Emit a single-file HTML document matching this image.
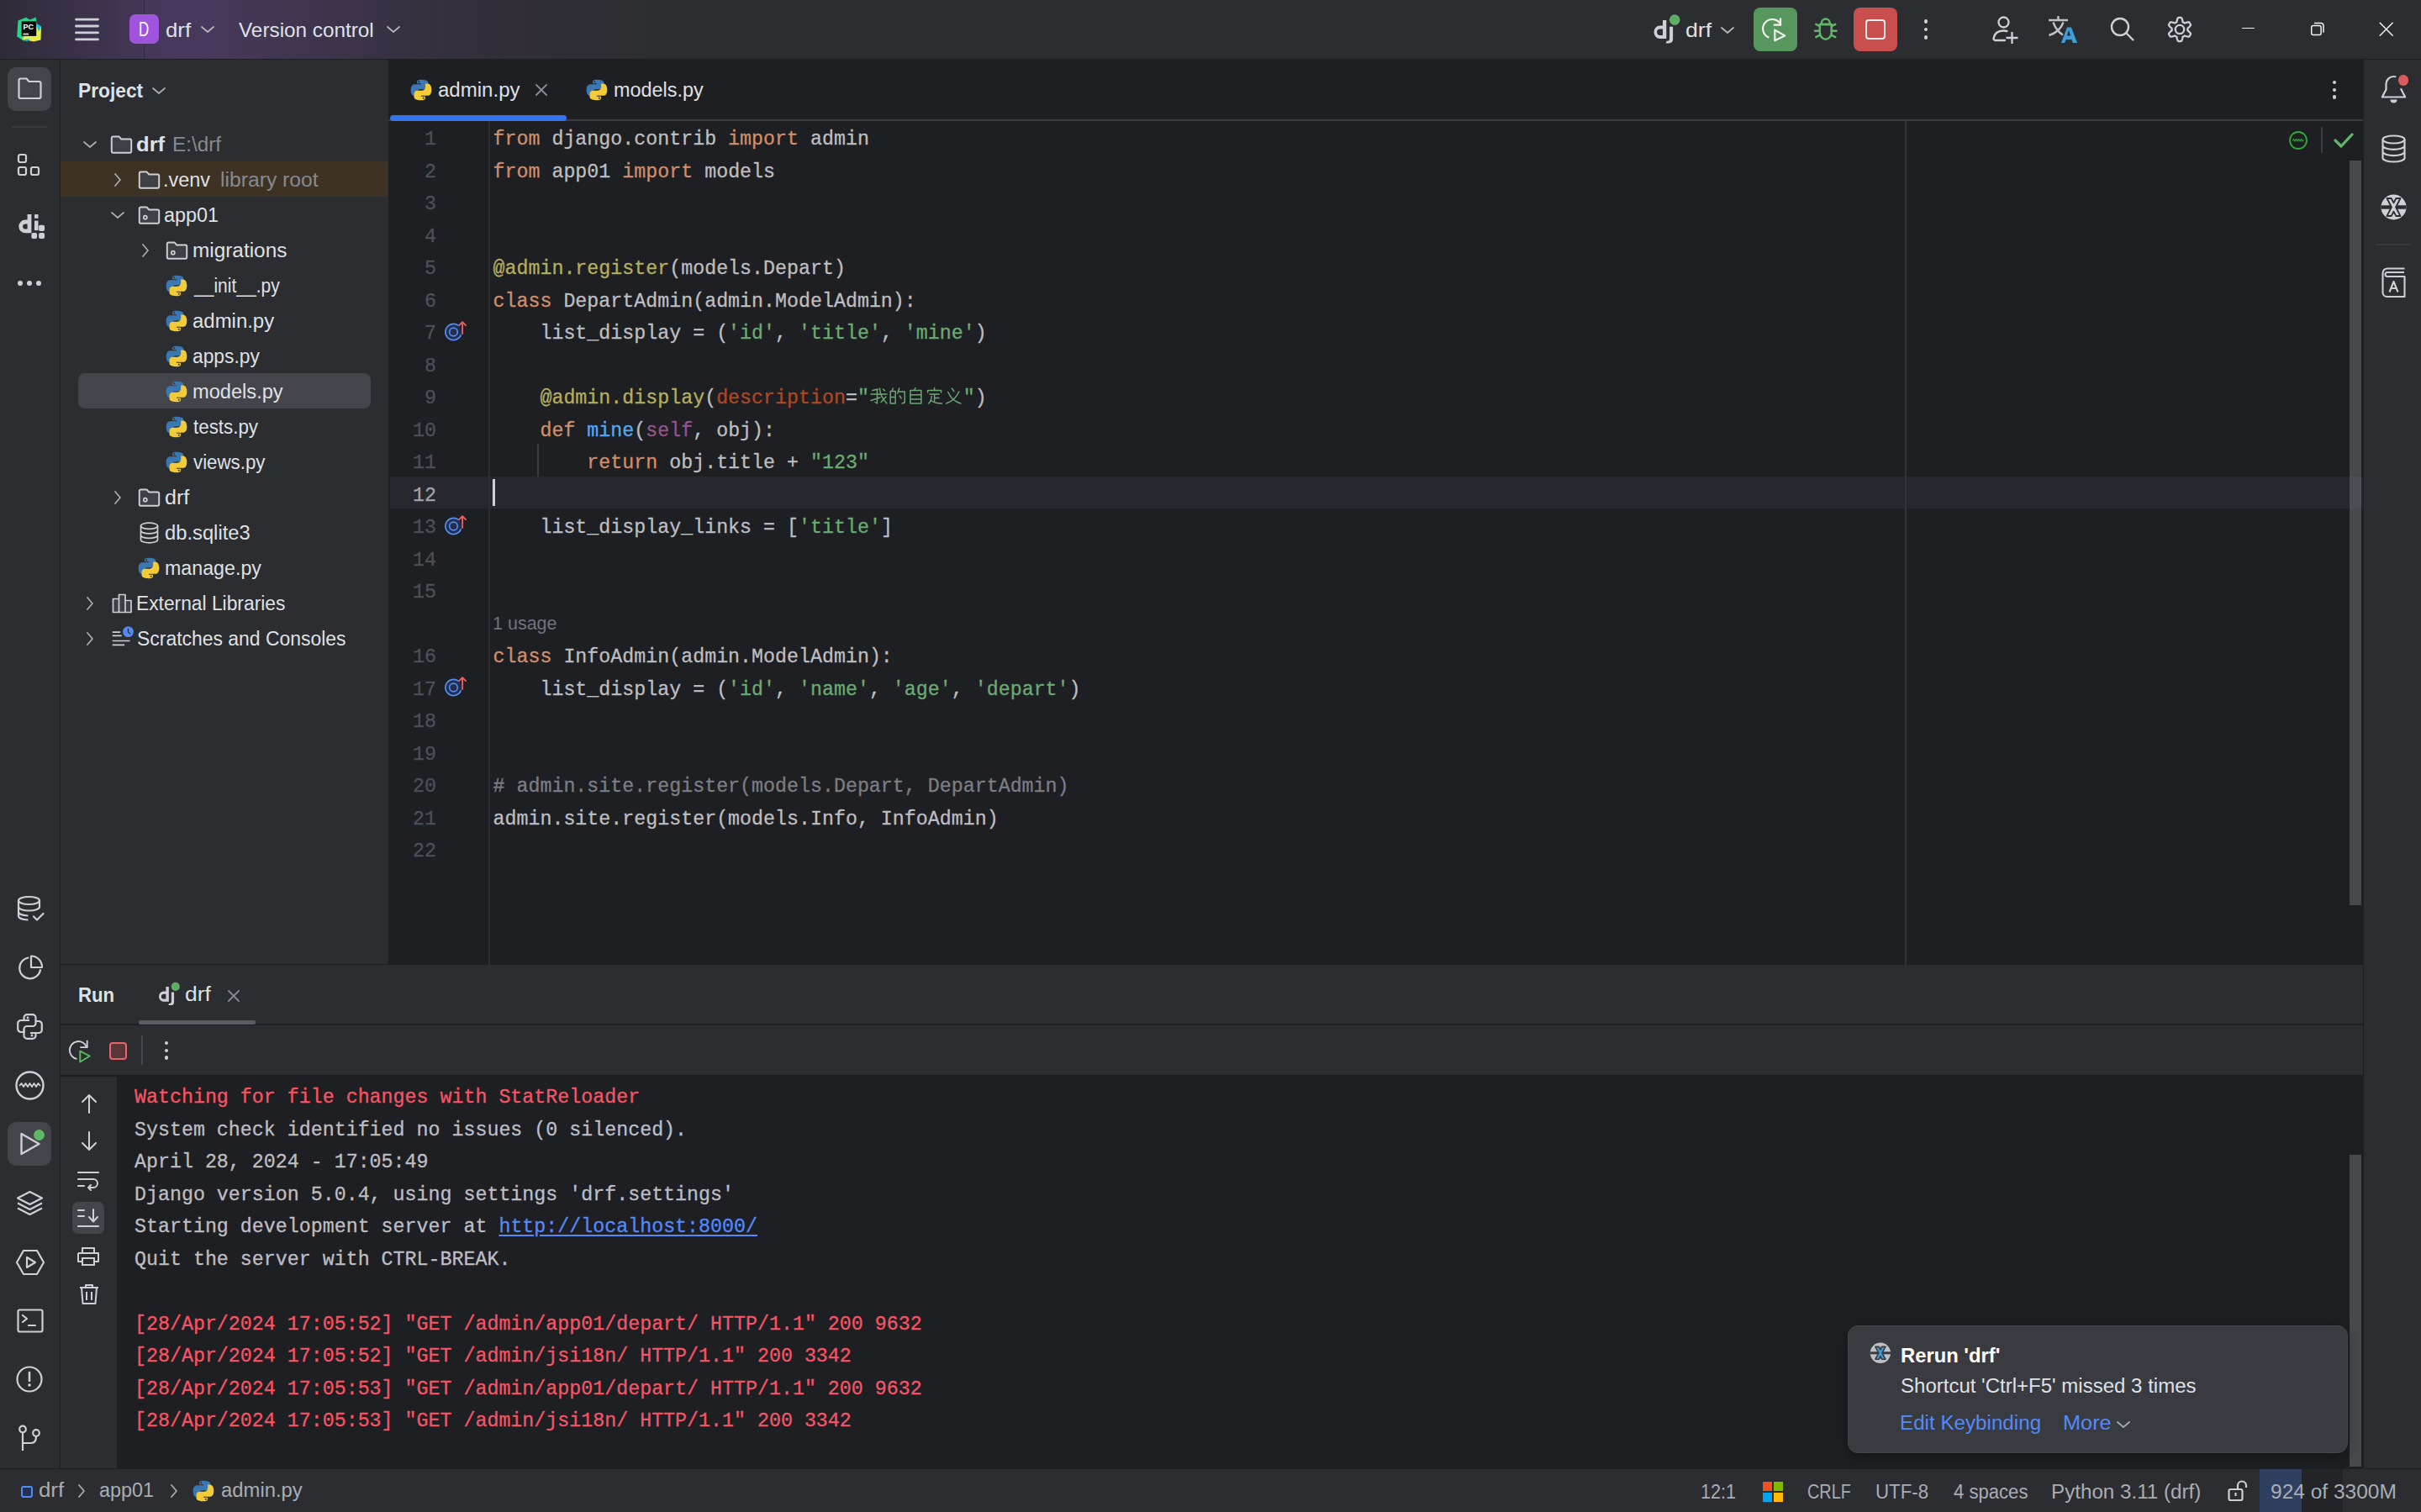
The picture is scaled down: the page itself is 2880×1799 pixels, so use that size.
<!DOCTYPE html><html><head><meta charset="utf-8"><style>
*{margin:0;padding:0;box-sizing:border-box}
html,body{width:2880px;height:1799px;overflow:hidden;background:#2b2d30;font-family:"Liberation Sans",sans-serif;color:#dfe1e5}
.a{position:absolute}
.t{position:absolute;white-space:pre;line-height:40px;height:40px}
.m{font-family:"Liberation Mono",monospace;-webkit-text-stroke:0.3px currentColor}
svg{position:absolute;overflow:visible}
</style></head><body>
<div class="a" style="left:0;top:0;width:2880px;height:70px;background:#2b2d30"></div>
<div class="a" style="left:0;top:0;width:1000px;height:70px;background:linear-gradient(90deg,#2f2b36 0px,#3a3148 90px,#46385a 190px,#47395b 250px,#3e344b 380px,#36303f 500px,#302d35 640px,#2b2d30 820px)"></div>
<div class="a" style="left:171px;top:0px;width:1px;height:70px;background:rgba(30,31,34,0.45);"></div>
<div class="a" style="left:0px;top:70px;width:2880px;height:1px;background:#1e1f22;"></div>
<div class="a" style="left:0px;top:71px;width:71px;height:1676px;background:#2b2d30;"></div>
<div class="a" style="left:71px;top:71px;width:1px;height:1676px;background:#1e1f22;"></div>
<div class="a" style="left:72px;top:71px;width:390px;height:1076px;background:#2b2d30;"></div>
<div class="a" style="left:462px;top:71px;width:2349px;height:1077px;background:#1e1f22;"></div>
<div class="a" style="left:2811px;top:71px;width:1px;height:1676px;background:#1e1f22;"></div>
<div class="a" style="left:2812px;top:71px;width:68px;height:1676px;background:#2b2d30;"></div>
<div class="a" style="left:72px;top:1147px;width:2739px;height:1px;background:#1e1f22;"></div>
<div class="a" style="left:72px;top:1148px;width:2739px;height:71px;background:#2b2d30;"></div>
<div class="a" style="left:72px;top:1218px;width:2739px;height:2px;background:#1e1f22;"></div>
<div class="a" style="left:72px;top:1220px;width:2739px;height:59px;background:#2b2d30;"></div>
<div class="a" style="left:72px;top:1281px;width:67px;height:466px;background:#2b2d30;"></div>
<div class="a" style="left:72px;top:1279px;width:2739px;height:2px;background:#1e1f22;"></div>
<div class="a" style="left:139px;top:1279px;width:2672px;height:468px;background:#1e1f22;"></div>
<div class="a" style="left:0px;top:1747px;width:2880px;height:1px;background:#1e1f22;"></div>
<div class="a" style="left:0px;top:1748px;width:2880px;height:51px;background:#2b2d30;"></div>
<div class="a" style="left:462px;top:142px;width:2349px;height:2px;background:#393b40;"></div>
<div class="a" style="left:464px;top:137px;width:210px;height:7px;background:#3574f0;border-radius:3.5px"></div>
<div class="a" style="left:464px;top:567px;width:2347px;height:38px;background:#26282e;"></div>
<div class="a" style="left:581px;top:144px;width:2px;height:1004px;background:#2b2d31;"></div>
<div class="a" style="left:2266px;top:144px;width:2px;height:1004px;background:#313337;"></div>
<div class="a" style="left:639px;top:528px;width:2px;height:39px;background:#393b40;"></div>
<div class="a m" style="left:440px;width:79px;text-align:right;top:147.04px;height:38.5px;line-height:38.5px;font-size:23.3px;color:#4b5059;white-space:pre">1</div>
<div class="a m" style="left:586.5px;top:147.04px;height:38.5px;line-height:38.5px;font-size:23.3px;white-space:pre"><span style="color:#cf8e6d">from</span><span style="color:#bcbec4"> django.contrib </span><span style="color:#cf8e6d">import</span><span style="color:#bcbec4"> admin</span></div>
<div class="a m" style="left:440px;width:79px;text-align:right;top:185.54px;height:38.5px;line-height:38.5px;font-size:23.3px;color:#4b5059;white-space:pre">2</div>
<div class="a m" style="left:586.5px;top:185.54px;height:38.5px;line-height:38.5px;font-size:23.3px;white-space:pre"><span style="color:#cf8e6d">from</span><span style="color:#bcbec4"> app01 </span><span style="color:#cf8e6d">import</span><span style="color:#bcbec4"> models</span></div>
<div class="a m" style="left:440px;width:79px;text-align:right;top:224.04px;height:38.5px;line-height:38.5px;font-size:23.3px;color:#4b5059;white-space:pre">3</div>
<div class="a m" style="left:440px;width:79px;text-align:right;top:262.54px;height:38.5px;line-height:38.5px;font-size:23.3px;color:#4b5059;white-space:pre">4</div>
<div class="a m" style="left:440px;width:79px;text-align:right;top:301.04px;height:38.5px;line-height:38.5px;font-size:23.3px;color:#4b5059;white-space:pre">5</div>
<div class="a m" style="left:586.5px;top:301.04px;height:38.5px;line-height:38.5px;font-size:23.3px;white-space:pre"><span style="color:#b3ae60">@admin.register</span><span style="color:#bcbec4">(models.Depart)</span></div>
<div class="a m" style="left:440px;width:79px;text-align:right;top:339.54px;height:38.5px;line-height:38.5px;font-size:23.3px;color:#4b5059;white-space:pre">6</div>
<div class="a m" style="left:586.5px;top:339.54px;height:38.5px;line-height:38.5px;font-size:23.3px;white-space:pre"><span style="color:#cf8e6d">class</span><span style="color:#bcbec4"> DepartAdmin(admin.ModelAdmin):</span></div>
<div class="a m" style="left:440px;width:79px;text-align:right;top:378.04px;height:38.5px;line-height:38.5px;font-size:23.3px;color:#4b5059;white-space:pre">7</div>
<div class="a m" style="left:586.5px;top:378.04px;height:38.5px;line-height:38.5px;font-size:23.3px;white-space:pre"><span style="color:#bcbec4">    list_display = (</span><span style="color:#6aab73">'id'</span><span style="color:#bcbec4">, </span><span style="color:#6aab73">'title'</span><span style="color:#bcbec4">, </span><span style="color:#6aab73">'mine'</span><span style="color:#bcbec4">)</span></div>
<div class="a m" style="left:440px;width:79px;text-align:right;top:416.54px;height:38.5px;line-height:38.5px;font-size:23.3px;color:#4b5059;white-space:pre">8</div>
<div class="a m" style="left:440px;width:79px;text-align:right;top:455.04px;height:38.5px;line-height:38.5px;font-size:23.3px;color:#4b5059;white-space:pre">9</div>
<div class="a m" style="left:586.5px;top:455.04px;height:38.5px;line-height:38.5px;font-size:23.3px;white-space:pre"><span style="color:#b3ae60">    @admin.display</span><span style="color:#bcbec4">(</span><span style="color:#aa4926">description</span><span style="color:#bcbec4">=</span><span style="color:#6aab73">"        "</span><span style="color:#bcbec4">)</span></div>
<div class="a m" style="left:440px;width:79px;text-align:right;top:493.54px;height:38.5px;line-height:38.5px;font-size:23.3px;color:#4b5059;white-space:pre">10</div>
<div class="a m" style="left:586.5px;top:493.54px;height:38.5px;line-height:38.5px;font-size:23.3px;white-space:pre"><span style="color:#bcbec4">    </span><span style="color:#cf8e6d">def</span><span style="color:#bcbec4"> </span><span style="color:#56a8f5">mine</span><span style="color:#bcbec4">(</span><span style="color:#94558d">self</span><span style="color:#bcbec4">, obj):</span></div>
<div class="a m" style="left:440px;width:79px;text-align:right;top:532.04px;height:38.5px;line-height:38.5px;font-size:23.3px;color:#4b5059;white-space:pre">11</div>
<div class="a m" style="left:586.5px;top:532.04px;height:38.5px;line-height:38.5px;font-size:23.3px;white-space:pre"><span style="color:#bcbec4">        </span><span style="color:#cf8e6d">return</span><span style="color:#bcbec4"> obj.title + </span><span style="color:#6aab73">"123"</span></div>
<div class="a m" style="left:440px;width:79px;text-align:right;top:570.54px;height:38.5px;line-height:38.5px;font-size:23.3px;color:#a1a3ab;white-space:pre">12</div>
<div class="a m" style="left:440px;width:79px;text-align:right;top:609.04px;height:38.5px;line-height:38.5px;font-size:23.3px;color:#4b5059;white-space:pre">13</div>
<div class="a m" style="left:586.5px;top:609.04px;height:38.5px;line-height:38.5px;font-size:23.3px;white-space:pre"><span style="color:#bcbec4">    list_display_links = [</span><span style="color:#6aab73">'title'</span><span style="color:#bcbec4">]</span></div>
<div class="a m" style="left:440px;width:79px;text-align:right;top:647.54px;height:38.5px;line-height:38.5px;font-size:23.3px;color:#4b5059;white-space:pre">14</div>
<div class="a m" style="left:440px;width:79px;text-align:right;top:686.04px;height:38.5px;line-height:38.5px;font-size:23.3px;color:#4b5059;white-space:pre">15</div>
<div class="a" style="left:586.0px;top:722.54px;height:38.5px;line-height:38.5px;font-size:21.5px;color:#6f737a;white-space:pre">1 usage</div>
<div class="a m" style="left:440px;width:79px;text-align:right;top:763.04px;height:38.5px;line-height:38.5px;font-size:23.3px;color:#4b5059;white-space:pre">16</div>
<div class="a m" style="left:586.5px;top:763.04px;height:38.5px;line-height:38.5px;font-size:23.3px;white-space:pre"><span style="color:#cf8e6d">class</span><span style="color:#bcbec4"> InfoAdmin(admin.ModelAdmin):</span></div>
<div class="a m" style="left:440px;width:79px;text-align:right;top:801.54px;height:38.5px;line-height:38.5px;font-size:23.3px;color:#4b5059;white-space:pre">17</div>
<div class="a m" style="left:586.5px;top:801.54px;height:38.5px;line-height:38.5px;font-size:23.3px;white-space:pre"><span style="color:#bcbec4">    list_display = (</span><span style="color:#6aab73">'id'</span><span style="color:#bcbec4">, </span><span style="color:#6aab73">'name'</span><span style="color:#bcbec4">, </span><span style="color:#6aab73">'age'</span><span style="color:#bcbec4">, </span><span style="color:#6aab73">'depart'</span><span style="color:#bcbec4">)</span></div>
<div class="a m" style="left:440px;width:79px;text-align:right;top:840.04px;height:38.5px;line-height:38.5px;font-size:23.3px;color:#4b5059;white-space:pre">18</div>
<div class="a m" style="left:440px;width:79px;text-align:right;top:878.54px;height:38.5px;line-height:38.5px;font-size:23.3px;color:#4b5059;white-space:pre">19</div>
<div class="a m" style="left:440px;width:79px;text-align:right;top:917.04px;height:38.5px;line-height:38.5px;font-size:23.3px;color:#4b5059;white-space:pre">20</div>
<div class="a m" style="left:586.5px;top:917.04px;height:38.5px;line-height:38.5px;font-size:23.3px;white-space:pre"><span style="color:#7a7e85"># admin.site.register(models.Depart, DepartAdmin)</span></div>
<div class="a m" style="left:440px;width:79px;text-align:right;top:955.54px;height:38.5px;line-height:38.5px;font-size:23.3px;color:#4b5059;white-space:pre">21</div>
<div class="a m" style="left:586.5px;top:955.54px;height:38.5px;line-height:38.5px;font-size:23.3px;white-space:pre"><span style="color:#bcbec4">admin.site.register(models.Info, InfoAdmin)</span></div>
<div class="a m" style="left:440px;width:79px;text-align:right;top:994.04px;height:38.5px;line-height:38.5px;font-size:23.3px;color:#4b5059;white-space:pre">22</div>
<div class="a" style="left:586px;top:570px;width:3px;height:32px;background:#ced0d6;"></div>
<div class="a" style="left:2795px;top:191px;width:14px;height:886px;background:rgba(128,130,136,0.42);"></div>
<div class="a" style="left:92.81px;top:88px;height:40px;line-height:40px;white-space:pre;font-size:23px;color:#dfe1e5;font-weight:bold;transform:scaleX(0.9896);transform-origin:0 0;">Project</div>
<svg style="left:180px;top:102px" width="18" height="12" viewBox="0 0 18 12"><path d="M2 3 L9 9 L16 3" fill="none" stroke="#a8abb0" stroke-width="1.8" stroke-linecap="round" stroke-linejoin="round"/></svg>
<div class="a" style="left:72px;top:192px;width:390px;height:42px;background:#3d3223;"></div>
<div class="a" style="left:93px;top:444px;width:348px;height:42px;background:#43454a;border-radius:8px"></div>
<svg style="left:97.5px;top:166px" width="18" height="12" viewBox="0 0 18 12"><path d="M2 3 L9 9 L16 3" fill="none" stroke="#a8abb0" stroke-width="1.8" stroke-linecap="round" stroke-linejoin="round"/></svg>
<svg style="left:131.5px;top:159px" width="25" height="25" viewBox="0 0 16 16"><path d="M1.5 2.2h4.6l1.7 1.9h6.7a1 1 0 0 1 1 1v8.4a1 1 0 0 1-1 1H1.5a1 1 0 0 1-1-1V3.2a1 1 0 0 1 1-1z" fill="#3e4045" stroke="#ced0d6" stroke-width="1.25"/></svg>
<div class="a" style="left:161.89px;top:152px;height:40px;line-height:40px;white-space:pre;font-size:23px;color:#dfe1e5;font-weight:bold;transform:scaleX(1.1133);transform-origin:0 0;">drf</div>
<div class="a" style="left:204.89px;top:152px;height:40px;line-height:40px;white-space:pre;font-size:23px;color:#868a91;font-weight:normal;transform:scaleX(1.0566);transform-origin:0 0;">E:\drf</div>
<svg style="left:133.5px;top:205px" width="12" height="18" viewBox="0 0 12 18"><path d="M3 2 L9 9 L3 16" fill="none" stroke="#a8abb0" stroke-width="1.8" stroke-linecap="round" stroke-linejoin="round"/></svg>
<svg style="left:164.5px;top:201px" width="25" height="25" viewBox="0 0 16 16"><path d="M1.5 2.2h4.6l1.7 1.9h6.7a1 1 0 0 1 1 1v8.4a1 1 0 0 1-1 1H1.5a1 1 0 0 1-1-1V3.2a1 1 0 0 1 1-1z" fill="#3e4045" stroke="#ced0d6" stroke-width="1.25"/></svg>
<div class="a" style="left:193.96px;top:194px;height:40px;line-height:40px;white-space:pre;font-size:23px;color:#dfe1e5;font-weight:normal;transform:scaleX(1.0189);transform-origin:0 0;">.venv</div>
<div class="a" style="left:261.93px;top:194px;height:40px;line-height:40px;white-space:pre;font-size:23px;color:#868a91;font-weight:normal;transform:scaleX(1.0741);transform-origin:0 0;">library root</div>
<svg style="left:130.5px;top:250px" width="18" height="12" viewBox="0 0 18 12"><path d="M2 3 L9 9 L16 3" fill="none" stroke="#a8abb0" stroke-width="1.8" stroke-linecap="round" stroke-linejoin="round"/></svg>
<svg style="left:164.5px;top:243px" width="25" height="25" viewBox="0 0 16 16"><path d="M1.5 2.2h4.6l1.7 1.9h6.7a1 1 0 0 1 1 1v8.4a1 1 0 0 1-1 1H1.5a1 1 0 0 1-1-1V3.2a1 1 0 0 1 1-1z" fill="#3e4045" stroke="#ced0d6" stroke-width="1.25"/><circle cx="5" cy="10" r="1.3" fill="none" stroke="#ced0d6" stroke-width="1.1"/></svg>
<div class="a" style="left:194.98px;top:236px;height:40px;line-height:40px;white-space:pre;font-size:23px;color:#dfe1e5;font-weight:normal;transform:scaleX(1.0161);transform-origin:0 0;">app01</div>
<svg style="left:166.5px;top:289px" width="12" height="18" viewBox="0 0 12 18"><path d="M3 2 L9 9 L3 16" fill="none" stroke="#a8abb0" stroke-width="1.8" stroke-linecap="round" stroke-linejoin="round"/></svg>
<svg style="left:197.5px;top:285px" width="25" height="25" viewBox="0 0 16 16"><path d="M1.5 2.2h4.6l1.7 1.9h6.7a1 1 0 0 1 1 1v8.4a1 1 0 0 1-1 1H1.5a1 1 0 0 1-1-1V3.2a1 1 0 0 1 1-1z" fill="#3e4045" stroke="#ced0d6" stroke-width="1.25"/><circle cx="5" cy="10" r="1.3" fill="none" stroke="#ced0d6" stroke-width="1.1"/></svg>
<div class="a" style="left:228.94px;top:278px;height:40px;line-height:40px;white-space:pre;font-size:23px;color:#dfe1e5;font-weight:normal;transform:scaleX(1.0590);transform-origin:0 0;">migrations</div>
<svg style="left:197.0px;top:326.5px" width="26" height="26" viewBox="0 0 16 16"><path d="M7.95.4C5.1.4 4.95 1.7 4.95 1.7V3.3h3.1v.5H3.5S.4 3.45.4 8.05s2.75 4.5 2.75 4.5h1.7v-2.25s-.1-2.75 2.7-2.75h3.05s2.6.05 2.6-2.5V2.85S13.6.4 7.95.4z" fill="#3b77b0"/><circle cx="6.3" cy="2.05" r=".6" fill="#2b2d30"/><g transform="rotate(180 8 8)"><path d="M7.95.4C5.1.4 4.95 1.7 4.95 1.7V3.3h3.1v.5H3.5S.4 3.45.4 8.05s2.75 4.5 2.75 4.5h1.7v-2.25s-.1-2.75 2.7-2.75h3.05s2.6.05 2.6-2.5V2.85S13.6.4 7.95.4z" fill="#f2cb36"/><circle cx="6.3" cy="2.05" r=".6" fill="#2b2d30"/></g></svg>
<div class="a" style="left:230.61px;top:320px;height:40px;line-height:40px;white-space:pre;font-size:23px;color:#dfe1e5;font-weight:normal;transform:scaleX(0.9142);transform-origin:0 0;">__init__.py</div>
<svg style="left:197.0px;top:368.5px" width="26" height="26" viewBox="0 0 16 16"><path d="M7.95.4C5.1.4 4.95 1.7 4.95 1.7V3.3h3.1v.5H3.5S.4 3.45.4 8.05s2.75 4.5 2.75 4.5h1.7v-2.25s-.1-2.75 2.7-2.75h3.05s2.6.05 2.6-2.5V2.85S13.6.4 7.95.4z" fill="#3b77b0"/><circle cx="6.3" cy="2.05" r=".6" fill="#2b2d30"/><g transform="rotate(180 8 8)"><path d="M7.95.4C5.1.4 4.95 1.7 4.95 1.7V3.3h3.1v.5H3.5S.4 3.45.4 8.05s2.75 4.5 2.75 4.5h1.7v-2.25s-.1-2.75 2.7-2.75h3.05s2.6.05 2.6-2.5V2.85S13.6.4 7.95.4z" fill="#f2cb36"/><circle cx="6.3" cy="2.05" r=".6" fill="#2b2d30"/></g></svg>
<div class="a" style="left:228.66px;top:362px;height:40px;line-height:40px;white-space:pre;font-size:23px;color:#dfe1e5;font-weight:normal;transform:scaleX(1.0409);transform-origin:0 0;">admin.py</div>
<svg style="left:197.0px;top:410.5px" width="26" height="26" viewBox="0 0 16 16"><path d="M7.95.4C5.1.4 4.95 1.7 4.95 1.7V3.3h3.1v.5H3.5S.4 3.45.4 8.05s2.75 4.5 2.75 4.5h1.7v-2.25s-.1-2.75 2.7-2.75h3.05s2.6.05 2.6-2.5V2.85S13.6.4 7.95.4z" fill="#3b77b0"/><circle cx="6.3" cy="2.05" r=".6" fill="#2b2d30"/><g transform="rotate(180 8 8)"><path d="M7.95.4C5.1.4 4.95 1.7 4.95 1.7V3.3h3.1v.5H3.5S.4 3.45.4 8.05s2.75 4.5 2.75 4.5h1.7v-2.25s-.1-2.75 2.7-2.75h3.05s2.6.05 2.6-2.5V2.85S13.6.4 7.95.4z" fill="#f2cb36"/><circle cx="6.3" cy="2.05" r=".6" fill="#2b2d30"/></g></svg>
<div class="a" style="left:228.71px;top:404px;height:40px;line-height:40px;white-space:pre;font-size:23px;color:#dfe1e5;font-weight:normal;transform:scaleX(0.9913);transform-origin:0 0;">apps.py</div>
<svg style="left:197.0px;top:452.5px" width="26" height="26" viewBox="0 0 16 16"><path d="M7.95.4C5.1.4 4.95 1.7 4.95 1.7V3.3h3.1v.5H3.5S.4 3.45.4 8.05s2.75 4.5 2.75 4.5h1.7v-2.25s-.1-2.75 2.7-2.75h3.05s2.6.05 2.6-2.5V2.85S13.6.4 7.95.4z" fill="#3b77b0"/><circle cx="6.3" cy="2.05" r=".6" fill="#2b2d30"/><g transform="rotate(180 8 8)"><path d="M7.95.4C5.1.4 4.95 1.7 4.95 1.7V3.3h3.1v.5H3.5S.4 3.45.4 8.05s2.75 4.5 2.75 4.5h1.7v-2.25s-.1-2.75 2.7-2.75h3.05s2.6.05 2.6-2.5V2.85S13.6.4 7.95.4z" fill="#f2cb36"/><circle cx="6.3" cy="2.05" r=".6" fill="#2b2d30"/></g></svg>
<div class="a" style="left:228.67px;top:446px;height:40px;line-height:40px;white-space:pre;font-size:23px;color:#dfe1e5;font-weight:normal;transform:scaleX(1.0269);transform-origin:0 0;">models.py</div>
<svg style="left:197.0px;top:494.5px" width="26" height="26" viewBox="0 0 16 16"><path d="M7.95.4C5.1.4 4.95 1.7 4.95 1.7V3.3h3.1v.5H3.5S.4 3.45.4 8.05s2.75 4.5 2.75 4.5h1.7v-2.25s-.1-2.75 2.7-2.75h3.05s2.6.05 2.6-2.5V2.85S13.6.4 7.95.4z" fill="#3b77b0"/><circle cx="6.3" cy="2.05" r=".6" fill="#2b2d30"/><g transform="rotate(180 8 8)"><path d="M7.95.4C5.1.4 4.95 1.7 4.95 1.7V3.3h3.1v.5H3.5S.4 3.45.4 8.05s2.75 4.5 2.75 4.5h1.7v-2.25s-.1-2.75 2.7-2.75h3.05s2.6.05 2.6-2.5V2.85S13.6.4 7.95.4z" fill="#f2cb36"/><circle cx="6.3" cy="2.05" r=".6" fill="#2b2d30"/></g></svg>
<div class="a" style="left:229.70px;top:488px;height:40px;line-height:40px;white-space:pre;font-size:23px;color:#dfe1e5;font-weight:normal;transform:scaleX(0.9712);transform-origin:0 0;">tests.py</div>
<svg style="left:197.0px;top:536.5px" width="26" height="26" viewBox="0 0 16 16"><path d="M7.95.4C5.1.4 4.95 1.7 4.95 1.7V3.3h3.1v.5H3.5S.4 3.45.4 8.05s2.75 4.5 2.75 4.5h1.7v-2.25s-.1-2.75 2.7-2.75h3.05s2.6.05 2.6-2.5V2.85S13.6.4 7.95.4z" fill="#3b77b0"/><circle cx="6.3" cy="2.05" r=".6" fill="#2b2d30"/><g transform="rotate(180 8 8)"><path d="M7.95.4C5.1.4 4.95 1.7 4.95 1.7V3.3h3.1v.5H3.5S.4 3.45.4 8.05s2.75 4.5 2.75 4.5h1.7v-2.25s-.1-2.75 2.7-2.75h3.05s2.6.05 2.6-2.5V2.85S13.6.4 7.95.4z" fill="#f2cb36"/><circle cx="6.3" cy="2.05" r=".6" fill="#2b2d30"/></g></svg>
<div class="a" style="left:229.70px;top:530px;height:40px;line-height:40px;white-space:pre;font-size:23px;color:#dfe1e5;font-weight:normal;transform:scaleX(0.9697);transform-origin:0 0;">views.py</div>
<svg style="left:133.5px;top:583px" width="12" height="18" viewBox="0 0 12 18"><path d="M3 2 L9 9 L3 16" fill="none" stroke="#a8abb0" stroke-width="1.8" stroke-linecap="round" stroke-linejoin="round"/></svg>
<svg style="left:164.5px;top:579px" width="25" height="25" viewBox="0 0 16 16"><path d="M1.5 2.2h4.6l1.7 1.9h6.7a1 1 0 0 1 1 1v8.4a1 1 0 0 1-1 1H1.5a1 1 0 0 1-1-1V3.2a1 1 0 0 1 1-1z" fill="#3e4045" stroke="#ced0d6" stroke-width="1.25"/><circle cx="5" cy="10" r="1.3" fill="none" stroke="#ced0d6" stroke-width="1.1"/></svg>
<div class="a" style="left:195.51px;top:572px;height:40px;line-height:40px;white-space:pre;font-size:23px;color:#dfe1e5;font-weight:normal;transform:scaleX(1.0923);transform-origin:0 0;">drf</div>
<svg style="left:165.5px;top:621px" width="25" height="26" viewBox="0 0 25 26"><ellipse cx="11.5" cy="4.8" rx="10" ry="3.6" fill="none" stroke="#ced0d6" stroke-width="1.7"/><path d="M1.5 4.8v16.4c0 2 4.5 3.6 10 3.6s10-1.6 10-3.6V4.8M1.5 10.3c0 2 4.5 3.6 10 3.6s10-1.6 10-3.6M1.5 15.8c0 2 4.5 3.6 10 3.6s10-1.6 10-3.6" fill="none" stroke="#ced0d6" stroke-width="1.7"/></svg>
<div class="a" style="left:195.57px;top:614px;height:40px;line-height:40px;white-space:pre;font-size:23px;color:#dfe1e5;font-weight:normal;transform:scaleX(1.0330);transform-origin:0 0;">db.sqlite3</div>
<svg style="left:164.0px;top:662.5px" width="26" height="26" viewBox="0 0 16 16"><path d="M7.95.4C5.1.4 4.95 1.7 4.95 1.7V3.3h3.1v.5H3.5S.4 3.45.4 8.05s2.75 4.5 2.75 4.5h1.7v-2.25s-.1-2.75 2.7-2.75h3.05s2.6.05 2.6-2.5V2.85S13.6.4 7.95.4z" fill="#3b77b0"/><circle cx="6.3" cy="2.05" r=".6" fill="#2b2d30"/><g transform="rotate(180 8 8)"><path d="M7.95.4C5.1.4 4.95 1.7 4.95 1.7V3.3h3.1v.5H3.5S.4 3.45.4 8.05s2.75 4.5 2.75 4.5h1.7v-2.25s-.1-2.75 2.7-2.75h3.05s2.6.05 2.6-2.5V2.85S13.6.4 7.95.4z" fill="#f2cb36"/><circle cx="6.3" cy="2.05" r=".6" fill="#2b2d30"/></g></svg>
<div class="a" style="left:195.59px;top:656px;height:40px;line-height:40px;white-space:pre;font-size:23px;color:#dfe1e5;font-weight:normal;transform:scaleX(1.0097);transform-origin:0 0;">manage.py</div>
<svg style="left:100.5px;top:709px" width="12" height="18" viewBox="0 0 12 18"><path d="M3 2 L9 9 L3 16" fill="none" stroke="#a8abb0" stroke-width="1.8" stroke-linecap="round" stroke-linejoin="round"/></svg>
<svg style="left:132.5px;top:706px" width="25" height="24" viewBox="0 0 25 24"><path d="M1.5 6.5h7v16h-7zM8.5 1.5h7.5v21H8.5zM16 8.5h7v14h-7z" fill="#3e4045" stroke="#ced0d6" stroke-width="1.7" stroke-linejoin="round"/></svg>
<div class="a" style="left:161.62px;top:698px;height:40px;line-height:40px;white-space:pre;font-size:23px;color:#dfe1e5;font-weight:normal;transform:scaleX(0.9910);transform-origin:0 0;">External Libraries</div>
<svg style="left:100.5px;top:751px" width="12" height="18" viewBox="0 0 12 18"><path d="M3 2 L9 9 L3 16" fill="none" stroke="#a8abb0" stroke-width="1.8" stroke-linecap="round" stroke-linejoin="round"/></svg>
<svg style="left:131.0px;top:744px" width="30" height="28" viewBox="0 0 30 28"><path d="M2.7 8.2h9.5M2.7 12.4h11M2.7 18.5h20.8M2.7 23.4h14.5" stroke="#ced0d6" stroke-width="1.7"/><circle cx="21.5" cy="7.6" r="6.4" fill="#548af7"/><path d="M21.5 3.8v4.2l2.6 2.2" stroke="#2b2d30" stroke-width="1.4" fill="none"/></svg>
<div class="a" style="left:162.60px;top:740px;height:40px;line-height:40px;white-space:pre;font-size:23px;color:#dfe1e5;font-weight:normal;transform:scaleX(0.9968);transform-origin:0 0;">Scratches and Consoles</div>
<svg style="left:20px;top:20px" width="30" height="30" viewBox="0 0 30 30"><path d="M1.5 4.5L11 0.8L15.5 3.5L22.5 0.5L24 8L17 27L8.5 28.8L0.2 23.5z" fill="#21d789"/><path d="M6 26.5L22 7.5L29 12L28.5 27.5L20 29.5z" fill="#e8f04a"/><path d="M22.5 7L29.2 11.5L26 17.5z" fill="#07c3f2"/><path d="M9 27L16 26L12 29.5z" fill="#07c3f2"/><rect x="5.6" y="5.3" width="17.6" height="17.6" fill="#0b0d08"/><text x="7.4" y="14.8" font-family="Liberation Sans" font-weight="bold" font-size="9" fill="#fff">PC</text><rect x="7.4" y="19.6" width="6.8" height="2" fill="#c8c8c8"/></svg>
<svg style="left:89px;top:20px" width="29" height="30" viewBox="0 0 29 30"><path d="M1.5 3.1h26M1.5 11h26M1.5 18.9h26M1.5 26.8h26" stroke="#cfd0d6" stroke-width="2.8" stroke-linecap="round"/></svg>
<div class="a" style="left:154px;top:17px;width:35px;height:35px;background:#a053dd;border-radius:7px"></div>
<div class="a" style="left:164.63px;top:15px;height:40px;line-height:40px;white-space:pre;font-size:23px;color:#ffffff;font-weight:normal;transform:scaleX(0.7357);transform-origin:0 0;">D</div>
<div class="a" style="left:196.93px;top:16px;height:40px;line-height:40px;white-space:pre;font-size:24px;color:#dfe1e5;font-weight:normal;transform:scaleX(1.0741);transform-origin:0 0;">drf</div>
<svg style="left:238px;top:29px" width="18" height="12" viewBox="0 0 18 12"><path d="M2 3 L9 9 L16 3" fill="none" stroke="#b4b6bc" stroke-width="1.8" stroke-linecap="round" stroke-linejoin="round"/></svg>
<div class="a" style="left:284.00px;top:16px;height:40px;line-height:40px;white-space:pre;font-size:24px;color:#dfe1e5;font-weight:normal;transform:scaleX(1.0127);transform-origin:0 0;">Version control</div>
<svg style="left:459px;top:29px" width="18" height="12" viewBox="0 0 18 12"><path d="M2 3 L9 9 L16 3" fill="none" stroke="#b4b6bc" stroke-width="1.8" stroke-linecap="round" stroke-linejoin="round"/></svg>
<svg style="left:1960px;top:10px" width="40" height="50" viewBox="0 0 40 50"><g transform="scale(1.0)"><path d="M22.3 36H14.5A7 7.75 0 0 1 14.5 20.5H18V13.9h4.3zM18 24.6h-3.3a3.6 3.7 0 0 0 0 7.4H18z" fill="#ced0d6" fill-rule="evenodd"/><path d="M26.1 21.8h4v15c0 3-1.8 4.6-5.2 4.6h-3.3l1-2.6c2.9 0 3.5-1.2 3.5-3.4z" fill="#ced0d6"/><circle cx="32.2" cy="13.6" r="6.3" fill="#5fad65"/></g></svg>
<div class="a" style="left:2004.89px;top:16px;height:40px;line-height:40px;white-space:pre;font-size:24px;color:#dfe1e5;font-weight:normal;transform:scaleX(1.1111);transform-origin:0 0;">drf</div>
<svg style="left:2046px;top:30px" width="18" height="12" viewBox="0 0 18 12"><path d="M2 3 L9 9 L16 3" fill="none" stroke="#b4b6bc" stroke-width="1.8" stroke-linecap="round" stroke-linejoin="round"/></svg>
<div class="a" style="left:2086px;top:9px;width:52px;height:52px;background:#57965c;border-radius:8px"></div>
<svg style="left:2094px;top:18px" width="34" height="34" viewBox="0 0 34 34"><path d="M24.5 11.5A11.2 11.2 0 1 0 10.4 26.7" fill="none" stroke="#f0f0f0" stroke-width="2.2"/><path d="M15.8 11.7H24V3.6" fill="none" stroke="#f0f0f0" stroke-width="2.2"/><path d="M17.3 17.7l11.9 6.7-11.9 5.9z" fill="none" stroke="#f0f0f0" stroke-width="2.2" stroke-linejoin="round"/></svg>
<svg style="left:2154px;top:18px" width="34" height="34" viewBox="0 0 34 34"><path d="M12.8 11V9.6a5 5 0 0 1 10 0V11z" fill="none" stroke="#5fb865" stroke-width="2.5" stroke-linejoin="round"/><path d="M10.8 11H24.8V20.5a7 8.2 0 0 1-14 0z" fill="none" stroke="#5fb865" stroke-width="2.5" stroke-linejoin="round"/><path d="M10.8 13.2L6.3 10.9M10.8 18.8H5M10.8 23.8L6.3 26.2M24.8 13.2l4.5-2.3M24.8 18.8h5.8M24.8 23.8l4.5 2.4" fill="none" stroke="#5fb865" stroke-width="2.5" stroke-linecap="round"/></svg>
<div class="a" style="left:2205px;top:9px;width:52px;height:52px;background:#c94f4f;border-radius:8px"></div>
<div class="a" style="left:2219px;top:23px;width:24px;height:24px;background:transparent;border:2.2px solid #f0f0f0;border-radius:4px"></div>
<div class="a" style="left:2288.7px;top:23.400000000000002px;width:4.6px;height:4.6px;background:#ced0d6;border-radius:3px"></div>
<div class="a" style="left:2288.7px;top:32.800000000000004px;width:4.6px;height:4.6px;background:#ced0d6;border-radius:3px"></div>
<div class="a" style="left:2288.7px;top:42.2px;width:4.6px;height:4.6px;background:#ced0d6;border-radius:3px"></div>
<svg style="left:2368px;top:17px" width="36" height="36" viewBox="0 0 36 36"><circle cx="15.5" cy="9.5" r="6" fill="none" stroke="#ced0d6" stroke-width="2.3"/><path d="M17 31H5.5a2 2 0 0 1-2-2.2C4.5 23 9 19.5 15.5 19.5c1.5 0 3 .2 4 .6" fill="none" stroke="#ced0d6" stroke-width="2.3" stroke-linecap="round"/><path d="M25.5 21v14M18.5 28h14" stroke="#ced0d6" stroke-width="2.3"/></svg>
<svg style="left:2434px;top:17px" width="38" height="36" viewBox="0 0 38 36"><path d="M3 7h23M14.5 2v5M8.5 9.5c2.5 7 6.5 12 11.5 15M20.5 9.5C18 17 13 22 3.5 25" fill="none" stroke="#bfc1c6" stroke-width="2.4"/><path d="M18 34L25 15.5h5L37 34h-5.2l-1.4-4h-6.8l-1.4 4zM24.8 25.5h4.4L27 19z" fill="#3d9fd9" fill-rule="evenodd"/></svg>
<svg style="left:2508px;top:18px" width="34" height="34" viewBox="0 0 34 34"><circle cx="14" cy="14" r="10" fill="none" stroke="#ced0d6" stroke-width="2.4"/><path d="M21.5 21.5l8 8" stroke="#ced0d6" stroke-width="2.4" stroke-linecap="round"/></svg>
<svg style="left:2577px;top:19px" width="32" height="32" viewBox="0 0 32 32"><path d="M25.50 16.00 L25.49 16.33 L25.48 16.66 L25.45 16.99 L25.41 17.32 L25.92 17.75 L26.50 18.23 L27.10 18.77 L27.69 19.35 L28.24 19.98 L28.71 20.63 L29.07 21.28 L28.88 21.73 L28.67 22.18 L28.45 22.62 L28.21 23.05 L27.96 23.47 L27.69 23.88 L27.41 24.29 L27.11 24.68 L26.36 24.69 L25.56 24.61 L24.75 24.45 L23.95 24.23 L23.18 23.98 L22.48 23.72 L21.85 23.49 L21.58 23.69 L21.31 23.88 L21.03 24.06 L20.75 24.23 L20.46 24.39 L20.16 24.54 L19.86 24.68 L19.56 24.81 L19.45 25.47 L19.32 26.21 L19.15 27.00 L18.94 27.80 L18.68 28.58 L18.35 29.32 L17.96 29.96 L17.47 30.02 L16.98 30.07 L16.49 30.09 L16.00 30.10 L15.51 30.09 L15.02 30.07 L14.53 30.02 L14.04 29.96 L13.65 29.32 L13.32 28.58 L13.06 27.80 L12.85 27.00 L12.68 26.21 L12.55 25.47 L12.44 24.81 L12.14 24.68 L11.84 24.54 L11.54 24.39 L11.25 24.23 L10.97 24.06 L10.69 23.88 L10.42 23.69 L10.15 23.49 L9.52 23.72 L8.82 23.98 L8.05 24.23 L7.25 24.45 L6.44 24.61 L5.64 24.69 L4.89 24.68 L4.59 24.29 L4.31 23.88 L4.04 23.47 L3.79 23.05 L3.55 22.62 L3.33 22.18 L3.12 21.73 L2.93 21.28 L3.29 20.63 L3.76 19.98 L4.31 19.35 L4.90 18.77 L5.50 18.23 L6.08 17.75 L6.59 17.32 L6.55 16.99 L6.52 16.66 L6.51 16.33 L6.50 16.00 L6.51 15.67 L6.52 15.34 L6.55 15.01 L6.59 14.68 L6.08 14.25 L5.50 13.77 L4.90 13.23 L4.31 12.65 L3.76 12.02 L3.29 11.37 L2.93 10.72 L3.12 10.27 L3.33 9.82 L3.55 9.38 L3.79 8.95 L4.04 8.53 L4.31 8.12 L4.59 7.71 L4.89 7.32 L5.64 7.31 L6.44 7.39 L7.25 7.55 L8.05 7.77 L8.82 8.02 L9.52 8.28 L10.15 8.51 L10.42 8.31 L10.69 8.12 L10.97 7.94 L11.25 7.77 L11.54 7.61 L11.84 7.46 L12.14 7.32 L12.44 7.19 L12.55 6.53 L12.68 5.79 L12.85 5.00 L13.06 4.20 L13.32 3.42 L13.65 2.68 L14.04 2.04 L14.53 1.98 L15.02 1.93 L15.51 1.91 L16.00 1.90 L16.49 1.91 L16.98 1.93 L17.47 1.98 L17.96 2.04 L18.35 2.68 L18.68 3.42 L18.94 4.20 L19.15 5.00 L19.32 5.79 L19.45 6.53 L19.56 7.19 L19.86 7.32 L20.16 7.46 L20.46 7.61 L20.75 7.77 L21.03 7.94 L21.31 8.12 L21.58 8.31 L21.85 8.51 L22.48 8.28 L23.18 8.02 L23.95 7.77 L24.75 7.55 L25.56 7.39 L26.36 7.31 L27.11 7.32 L27.41 7.71 L27.69 8.12 L27.96 8.53 L28.21 8.95 L28.45 9.38 L28.67 9.82 L28.88 10.27 L29.07 10.72 L28.71 11.37 L28.24 12.02 L27.69 12.65 L27.10 13.23 L26.50 13.77 L25.92 14.25 L25.41 14.68 L25.45 15.01 L25.48 15.34 L25.49 15.67Z" fill="none" stroke="#ced0d6" stroke-width="2.3" stroke-linejoin="round"/><circle cx="16" cy="16" r="5.2" fill="none" stroke="#ced0d6" stroke-width="2.3"/></svg>
<div class="a" style="left:2667px;top:32.9px;width:15.2px;height:1.5px;background:#f2f2f2;"></div>
<svg style="left:2745px;top:24px" width="22" height="22" viewBox="0 0 22 22"><rect x="4.7" y="6.4" width="11.4" height="11" rx="2" fill="none" stroke="#f2f2f2" stroke-width="1.5"/><path d="M8 3.4h7.8a3.2 3.2 0 0 1 3.2 3.2v8.2" fill="none" stroke="#f2f2f2" stroke-width="1.5"/></svg>
<svg style="left:2828px;top:24px" width="22" height="22" viewBox="0 0 22 22"><path d="M3.2 3.2l15 15M18.2 3.2l-15 15" stroke="#f2f2f2" stroke-width="1.5" stroke-linecap="round"/></svg>
<svg style="left:487.5px;top:93.5px" width="26" height="26" viewBox="0 0 16 16"><path d="M7.95.4C5.1.4 4.95 1.7 4.95 1.7V3.3h3.1v.5H3.5S.4 3.45.4 8.05s2.75 4.5 2.75 4.5h1.7v-2.25s-.1-2.75 2.7-2.75h3.05s2.6.05 2.6-2.5V2.85S13.6.4 7.95.4z" fill="#3b77b0"/><circle cx="6.3" cy="2.05" r=".6" fill="#2b2d30"/><g transform="rotate(180 8 8)"><path d="M7.95.4C5.1.4 4.95 1.7 4.95 1.7V3.3h3.1v.5H3.5S.4 3.45.4 8.05s2.75 4.5 2.75 4.5h1.7v-2.25s-.1-2.75 2.7-2.75h3.05s2.6.05 2.6-2.5V2.85S13.6.4 7.95.4z" fill="#f2cb36"/><circle cx="6.3" cy="2.05" r=".6" fill="#2b2d30"/></g></svg>
<div class="a" style="left:520.95px;top:87px;height:40px;line-height:40px;white-space:pre;font-size:23px;color:#dfe1e5;font-weight:normal;transform:scaleX(1.0452);transform-origin:0 0;">admin.py</div>
<svg style="left:636px;top:99px" width="16" height="16" viewBox="0 0 16 16"><path d="M2 2l12 12M14 2L2 14" stroke="#868a91" stroke-width="2" stroke-linecap="round"/></svg>
<svg style="left:696.5px;top:93.5px" width="26" height="26" viewBox="0 0 16 16"><path d="M7.95.4C5.1.4 4.95 1.7 4.95 1.7V3.3h3.1v.5H3.5S.4 3.45.4 8.05s2.75 4.5 2.75 4.5h1.7v-2.25s-.1-2.75 2.7-2.75h3.05s2.6.05 2.6-2.5V2.85S13.6.4 7.95.4z" fill="#3b77b0"/><circle cx="6.3" cy="2.05" r=".6" fill="#2b2d30"/><g transform="rotate(180 8 8)"><path d="M7.95.4C5.1.4 4.95 1.7 4.95 1.7V3.3h3.1v.5H3.5S.4 3.45.4 8.05s2.75 4.5 2.75 4.5h1.7v-2.25s-.1-2.75 2.7-2.75h3.05s2.6.05 2.6-2.5V2.85S13.6.4 7.95.4z" fill="#f2cb36"/><circle cx="6.3" cy="2.05" r=".6" fill="#2b2d30"/></g></svg>
<div class="a" style="left:729.58px;top:87px;height:40px;line-height:40px;white-space:pre;font-size:23px;color:#dfe1e5;font-weight:normal;transform:scaleX(1.0183);transform-origin:0 0;">models.py</div>
<div class="a" style="left:2774.7px;top:95.8px;width:4.4px;height:4.4px;background:#ced0d6;border-radius:3px"></div>
<div class="a" style="left:2774.7px;top:104.6px;width:4.4px;height:4.4px;background:#ced0d6;border-radius:3px"></div>
<div class="a" style="left:2774.7px;top:113.39999999999999px;width:4.4px;height:4.4px;background:#ced0d6;border-radius:3px"></div>
<svg style="left:2722px;top:155px" width="24" height="24" viewBox="0 0 24 24"><circle cx="12" cy="12" r="10" fill="none" stroke="#2fa93a" stroke-width="1.8"/><path d="M5 12.5l1.5-2 1.5 2.5 1.5-2.5 1.5 2.5 1.5-2.5 1.5 2.5 1.5-2.5 1.5 2.5 1.5-2" fill="none" stroke="#2fa93a" stroke-width="1.1"/></svg>
<div class="a" style="left:2761px;top:151px;width:2px;height:31px;background:#393b40;"></div>
<svg style="left:2776px;top:158px" width="24" height="18" viewBox="0 0 24 18"><path d="M2 9l7 7L22 2" fill="none" stroke="#5fb865" stroke-width="3.2" stroke-linecap="round" stroke-linejoin="round"/></svg>
<svg style="left:525px;top:379.6px" width="34" height="30" viewBox="0 0 34 30"><circle cx="14.5" cy="15" r="9.6" fill="#24304a"/><path d="M23.52 18.28A9.6 9.6 0 1 1 20.41 7.44" fill="none" stroke="#548af7" stroke-width="1.7"/><circle cx="14.5" cy="15" r="4.8" fill="none" stroke="#548af7" stroke-width="1.7"/><path d="M25.1 17V3.5M21.2 7.2l3.9-4.1 3.9 4.1" fill="none" stroke="#e5605f" stroke-width="1.9" stroke-linecap="round" stroke-linejoin="round"/></svg>
<svg style="left:525px;top:610.6px" width="34" height="30" viewBox="0 0 34 30"><circle cx="14.5" cy="15" r="9.6" fill="#24304a"/><path d="M23.52 18.28A9.6 9.6 0 1 1 20.41 7.44" fill="none" stroke="#548af7" stroke-width="1.7"/><circle cx="14.5" cy="15" r="4.8" fill="none" stroke="#548af7" stroke-width="1.7"/><path d="M25.1 17V3.5M21.2 7.2l3.9-4.1 3.9 4.1" fill="none" stroke="#e5605f" stroke-width="1.9" stroke-linecap="round" stroke-linejoin="round"/></svg>
<svg style="left:525px;top:803.1px" width="34" height="30" viewBox="0 0 34 30"><circle cx="14.5" cy="15" r="9.6" fill="#24304a"/><path d="M23.52 18.28A9.6 9.6 0 1 1 20.41 7.44" fill="none" stroke="#548af7" stroke-width="1.7"/><circle cx="14.5" cy="15" r="4.8" fill="none" stroke="#548af7" stroke-width="1.7"/><path d="M25.1 17V3.5M21.2 7.2l3.9-4.1 3.9 4.1" fill="none" stroke="#e5605f" stroke-width="1.9" stroke-linecap="round" stroke-linejoin="round"/></svg>
<div class="a" style="left:9px;top:80px;width:52px;height:52px;background:#43454a;border-radius:10px"></div>
<svg style="left:20px;top:92px" width="32" height="28" viewBox="0 0 32 28"><path d="M2.5 3.5a2 2 0 0 1 2-2h7l3 3.5h12a2 2 0 0 1 2 2v16a2 2 0 0 1-2 2h-22a2 2 0 0 1-2-2z" fill="none" stroke="#ced0d6" stroke-width="2.2" stroke-linejoin="round"/></svg>
<div class="a" style="left:14px;top:150px;width:42px;height:2px;background:#393b40;"></div>
<svg style="left:20px;top:182px" width="32" height="30" viewBox="0 0 32 30"><rect x="2" y="2" width="9" height="9" rx="2" fill="none" stroke="#ced0d6" stroke-width="2.2"/><rect x="2" y="17" width="9" height="9" rx="2" fill="none" stroke="#ced0d6" stroke-width="2.2"/><rect x="17" y="17" width="9" height="9" rx="2" fill="none" stroke="#ced0d6" stroke-width="2.2"/></svg>
<svg style="left:10px;top:240px" width="60" height="60" viewBox="0 0 60 60"><path d="M27.4 37.3H20.2A7.9 7.85 0 0 1 20.2 21.6h2.4v-6.5h4.8zM22.6 26.4h-2.2a3.3 3.1 0 0 0 0 6.2h2.2z" fill="#ced0d6" fill-rule="evenodd"/><rect x="31" y="15.1" width="4.5" height="4.7" fill="#ced0d6"/><rect x="31" y="22.6" width="4.5" height="11.5" fill="#ced0d6"/><rect x="36.1" y="27.8" width="7" height="7.3" rx="2" fill="#ced0d6"/><rect x="27.4" y="37.1" width="6.7" height="6.9" rx="2" fill="#ced0d6"/><rect x="36.1" y="37.1" width="7" height="6.9" rx="2" fill="#ced0d6"/></svg>
<div class="a" style="left:21px;top:334px;width:6px;height:6px;background:#ced0d6;border-radius:3px"></div>
<div class="a" style="left:32px;top:334px;width:6px;height:6px;background:#ced0d6;border-radius:3px"></div>
<div class="a" style="left:43px;top:334px;width:6px;height:6px;background:#ced0d6;border-radius:3px"></div>
<svg style="left:20px;top:1065px" width="34" height="34" viewBox="0 0 34 34"><ellipse cx="14.5" cy="6.5" rx="12.5" ry="4.5" fill="none" stroke="#ced0d6" stroke-width="2.2"/><path d="M2 6.5v18.5c0 2.5 5 4.3 11.5 4.5M27 6.5v8M2 14c0 2.5 5.6 4.5 12.5 4.5S27 16.5 27 14M2 20c0 2.5 5 4.3 11.5 4.5" fill="none" stroke="#ced0d6" stroke-width="2.2"/><path d="M20 25.5l4 4 7.5-7.5" fill="none" stroke="#ced0d6" stroke-width="2.2" stroke-linecap="round" stroke-linejoin="round"/></svg>
<svg style="left:20px;top:1135px" width="32" height="33" viewBox="0 0 32 33"><path d="M13.5 4.5A12.5 12.5 0 1 0 28 19" fill="none" stroke="#ced0d6" stroke-width="2.2" stroke-linecap="round"/><path d="M17 2.5v13.5h13A13 13 0 0 0 17 2.5z" fill="none" stroke="#ced0d6" stroke-width="2.2" stroke-linejoin="round"/></svg>
<svg style="left:20px;top:1206px" width="31" height="31" viewBox="0 0 31 31"><path d="M8.5 8V5a3.8 3.8 0 0 1 3.8-3.8h6.4A3.8 3.8 0 0 1 22.5 5v6.5a3.5 3.5 0 0 1-3.5 3.5h-7a3.5 3.5 0 0 0-3.5 3.5V22H5a3.8 3.8 0 0 1-3.8-3.8v-6.4A3.8 3.8 0 0 1 5 8h10" fill="none" stroke="#ced0d6" stroke-width="2.2" stroke-linejoin="round"/><path d="M22.5 23v3a3.8 3.8 0 0 1-3.8 3.8h-6.4A3.8 3.8 0 0 1 8.5 26v-6.5" fill="none" stroke="#ced0d6" stroke-width="2.2"/><path d="M22.5 9H26a3.8 3.8 0 0 1 3.8 3.8v6.4A3.8 3.8 0 0 1 26 23H16" fill="none" stroke="#ced0d6" stroke-width="2.2" stroke-linejoin="round"/><circle cx="13" cy="5" r="1.4" fill="#ced0d6"/><circle cx="18" cy="26" r="1.4" fill="#ced0d6"/></svg>
<svg style="left:18px;top:1274px" width="36" height="36" viewBox="0 0 36 36"><circle cx="17.5" cy="17.5" r="16" fill="none" stroke="#ced0d6" stroke-width="2.4"/><path d="M5 18l2.5-3 2.5 4 2.5-4 2.5 4 2.5-4 2.5 4 2.5-4 2.5 4 2.5-4 2.5 3" fill="none" stroke="#ced0d6" stroke-width="1.8" stroke-linejoin="round"/></svg>
<div class="a" style="left:9px;top:1335px;width:52px;height:52px;background:#43454a;border-radius:10px"></div>
<svg style="left:22px;top:1345px" width="30" height="32" viewBox="0 0 30 32"><path d="M3.5 4v24l21-12z" fill="none" stroke="#ced0d6" stroke-width="2.4" stroke-linejoin="round"/></svg>
<div class="a" style="left:40px;top:1344px;width:13px;height:13px;border-radius:7px;background:#5fb865;box-shadow:0 0 0 1px #43454a"></div>
<svg style="left:20px;top:1416px" width="32" height="32" viewBox="0 0 32 32"><path d="M15.5 2L30 9.5 15.5 17 1 9.5z" fill="none" stroke="#ced0d6" stroke-width="2.2" stroke-linejoin="round"/><path d="M1 15.5L15.5 23 30 15.5M1 21.5L15.5 29 30 21.5" fill="none" stroke="#ced0d6" stroke-width="2.2" stroke-linejoin="round"/></svg>
<svg style="left:19px;top:1486px" width="34" height="32" viewBox="0 0 34 32"><path d="M9 2h16l8 14-8 14H9L1 16z" fill="none" stroke="#ced0d6" stroke-width="2.2" stroke-linejoin="round"/><path d="M13 10v12l10-6z" fill="none" stroke="#ced0d6" stroke-width="2.2" stroke-linejoin="round"/></svg>
<svg style="left:20px;top:1557px" width="32" height="30" viewBox="0 0 32 30"><rect x="1.5" y="1.5" width="29" height="26" rx="2" fill="none" stroke="#ced0d6" stroke-width="2.2"/><path d="M7 8l5 4-5 4M14 20h8" fill="none" stroke="#ced0d6" stroke-width="2.2" stroke-linecap="round" stroke-linejoin="round"/></svg>
<svg style="left:19px;top:1625px" width="32" height="32" viewBox="0 0 32 32"><circle cx="16" cy="16" r="14.5" fill="none" stroke="#ced0d6" stroke-width="2.2"/><path d="M16 8v10" stroke="#ced0d6" stroke-width="2.6" stroke-linecap="round"/><circle cx="16" cy="23" r="1.8" fill="#ced0d6"/></svg>
<svg style="left:20px;top:1695px" width="30" height="32" viewBox="0 0 30 32"><circle cx="7" cy="5.5" r="3.8" fill="none" stroke="#ced0d6" stroke-width="2.2"/><circle cx="23" cy="10" r="3.8" fill="none" stroke="#ced0d6" stroke-width="2.2"/><path d="M7 9.5V31M23 14c0 6-2 8-6 8H7" fill="none" stroke="#ced0d6" stroke-width="2.2"/></svg>
<svg style="left:2831px;top:89px" width="34" height="35" viewBox="0 0 34 35"><path d="M2.8 26.5h27.4l-4.7-9V11a9 9 0 0 0-18 0v6.5z" fill="none" stroke="#ced0d6" stroke-width="2.2" stroke-linejoin="round"/><path d="M12.5 29.5a4 4 0 0 0 8 0z" fill="#ced0d6"/></svg>
<div class="a" style="left:2852.5px;top:89px;width:12.6px;height:12.6px;border-radius:7px;background:#db5c5c;box-shadow:0 0 0 3.5px #2b2d30"></div>
<svg style="left:2832px;top:160px" width="31" height="35" viewBox="0 0 31 35"><ellipse cx="15.5" cy="6" rx="13" ry="4.5" fill="none" stroke="#ced0d6" stroke-width="2.2"/><path d="M2.5 6v22c0 2.5 5.8 4.5 13 4.5s13-2 13-4.5V6M2.5 13.3c0 2.5 5.8 4.5 13 4.5s13-2 13-4.5M2.5 20.6c0 2.5 5.8 4.5 13 4.5s13-2 13-4.5" fill="none" stroke="#ced0d6" stroke-width="2.2"/></svg>
<svg style="left:2832px;top:231px" width="31" height="31" viewBox="0 0 31 31"><defs><clipPath id="xc"><circle cx="15.5" cy="15.5" r="15"/></clipPath></defs><circle cx="15.5" cy="15.5" r="15" fill="#ced0d6"/><rect x="0" y="13.3" width="31" height="4.4" fill="#2b2d30" clip-path="url(#xc)"/><path d="M7.5 5h5.2l2.8 5.4 2.8-5.4h5.2l-5.4 10.5 5.4 10.5h-5.2l-2.8-5.4-2.8 5.4H7.5l5.4-10.5z" fill="#ced0d6" stroke="#2b2d30" stroke-width="1.8" stroke-linejoin="round"/></svg>
<div class="a" style="left:2826px;top:290px;width:42px;height:2px;background:#393b40;"></div>
<svg style="left:2832px;top:318px" width="31" height="37" viewBox="0 0 31 37"><path d="M28.5 1.5H8A5.5 5.5 0 0 0 2.5 7v23a5 5 0 0 0 5 5h21V11H8a2.5 2.5 0 0 1 0-5h20" fill="none" stroke="#ced0d6" stroke-width="2.1" stroke-linejoin="round"/><path d="M10.5 29.5l5-12.5 5 12.5M12.3 25h6.4" fill="none" stroke="#ced0d6" stroke-width="2.1" stroke-linejoin="round"/></svg>
<div class="a" style="left:93.03px;top:1164px;height:40px;line-height:40px;white-space:pre;font-size:23px;color:#dfe1e5;font-weight:bold;transform:scaleX(0.9651);transform-origin:0 0;">Run</div>
<svg style="left:183.3px;top:1162.9px" width="32" height="40" viewBox="0 0 32 40"><g transform="scale(0.8)"><path d="M22.3 36H14.5A7 7.75 0 0 1 14.5 20.5H18V13.9h4.3zM18 24.6h-3.3a3.6 3.7 0 0 0 0 7.4H18z" fill="#ced0d6" fill-rule="evenodd"/><path d="M26.1 21.8h4v15c0 3-1.8 4.6-5.2 4.6h-3.3l1-2.6c2.9 0 3.5-1.2 3.5-3.4z" fill="#ced0d6"/><circle cx="32.2" cy="13.6" r="6.3" fill="#5fad65"/></g></svg>
<div class="a" style="left:219.85px;top:1163px;height:40px;line-height:40px;white-space:pre;font-size:23px;color:#dfe1e5;font-weight:normal;transform:scaleX(1.1538);transform-origin:0 0;">drf</div>
<svg style="left:270px;top:1177px" width="16" height="16" viewBox="0 0 16 16"><path d="M2 2l12 12M14 2L2 14" stroke="#868a91" stroke-width="1.8" stroke-linecap="round"/></svg>
<div class="a" style="left:165px;top:1214px;width:139px;height:5.2px;background:#595c62;border-radius:2px"></div>
<svg style="left:80px;top:1236px" width="30" height="30" viewBox="0 0 30 30"><path d="M23.2 10A10.5 10.5 0 1 0 11.5 23.9" fill="none" stroke="#ced0d6" stroke-width="1.9"/><path d="M15.3 10.1h8.4V1.7" fill="none" stroke="#ced0d6" stroke-width="1.9"/><path d="M15.3 14.6l11.4 5.9-11.4 7z" fill="#1f3524" stroke="#5fb865" stroke-width="1.9" stroke-linejoin="round"/></svg>
<div class="a" style="left:129.5px;top:1239.5px;width:21px;height:21px;background:#5c3538;border:2px solid #e5676b;border-radius:4px"></div>
<div class="a" style="left:168px;top:1232px;width:2px;height:35px;background:#43454a;"></div>
<div class="a" style="left:195.7px;top:1238.8px;width:4.5px;height:4.5px;background:#ced0d6;border-radius:3px"></div>
<div class="a" style="left:195.7px;top:1247.6px;width:4.5px;height:4.5px;background:#ced0d6;border-radius:3px"></div>
<div class="a" style="left:195.7px;top:1256.3999999999999px;width:4.5px;height:4.5px;background:#ced0d6;border-radius:3px"></div>
<svg style="left:95px;top:1300px" width="22" height="26" viewBox="0 0 22 26"><path d="M11 3v21M3 11l8-8 8 8" fill="none" stroke="#ced0d6" stroke-width="2" stroke-linecap="round" stroke-linejoin="round"/></svg>
<svg style="left:95px;top:1345px" width="22" height="26" viewBox="0 0 22 26"><path d="M11 2v21M3 15l8 8 8-8" fill="none" stroke="#ced0d6" stroke-width="2" stroke-linecap="round" stroke-linejoin="round"/></svg>
<svg style="left:92px;top:1393px" width="28" height="24" viewBox="0 0 28 24"><path d="M1 2h24M1 18h7M1 10h18a5 5 0 0 1 0 10h-6M16 17l-3 3 3 3" fill="none" stroke="#ced0d6" stroke-width="2" stroke-linecap="round" stroke-linejoin="round"/></svg>
<div class="a" style="left:86px;top:1430px;width:38px;height:38px;background:#43454a;border-radius:7px"></div>
<svg style="left:92px;top:1438px" width="28" height="24" viewBox="0 0 28 24"><path d="M1 2h7M1 9h7M1 21h24M19 1v14M14 10l5 5.5 5-5.5" fill="none" stroke="#ced0d6" stroke-width="2" stroke-linecap="round" stroke-linejoin="round"/></svg>
<svg style="left:92px;top:1483px" width="28" height="24" viewBox="0 0 28 24"><path d="M6 8V2h14v6M1 8h24v10h-5M6 18H1V8" fill="none" stroke="#ced0d6" stroke-width="2" stroke-linejoin="round"/><rect x="6" y="14" width="14" height="8" fill="none" stroke="#ced0d6" stroke-width="2"/></svg>
<svg style="left:94px;top:1527px" width="24" height="26" viewBox="0 0 24 26"><path d="M1 5h22M8 5V2h8v3M3 5l1.5 19h15L21 5M9 10v10M15 10v10" fill="none" stroke="#ced0d6" stroke-width="2" stroke-linejoin="round"/></svg>
<div class="a m" style="left:160px;top:1287.04px;height:38.5px;line-height:38.5px;font-size:23.3px;color:#f75464;white-space:pre">Watching for file changes with StatReloader</div>
<div class="a m" style="left:160px;top:1325.54px;height:38.5px;line-height:38.5px;font-size:23.3px;color:#bcbec4;white-space:pre">System check identified no issues (0 silenced).</div>
<div class="a m" style="left:160px;top:1364.04px;height:38.5px;line-height:38.5px;font-size:23.3px;color:#bcbec4;white-space:pre">April 28, 2024 - 17:05:49</div>
<div class="a m" style="left:160px;top:1402.54px;height:38.5px;line-height:38.5px;font-size:23.3px;color:#bcbec4;white-space:pre">Django version 5.0.4, using settings 'drf.settings'</div>
<div class="a m" style="left:160px;top:1441.04px;height:38.5px;line-height:38.5px;font-size:23.3px;color:#bcbec4;white-space:pre">Starting development server at <span style="color:#548af7;text-decoration:underline;text-underline-offset:3px">http://localhost:8000/</span></div>
<div class="a m" style="left:160px;top:1479.54px;height:38.5px;line-height:38.5px;font-size:23.3px;color:#bcbec4;white-space:pre">Quit the server with CTRL-BREAK.</div>
<div class="a m" style="left:160px;top:1518.04px;height:38.5px;line-height:38.5px;font-size:23.3px;color:#bcbec4;white-space:pre"></div>
<div class="a m" style="left:160px;top:1556.54px;height:38.5px;line-height:38.5px;font-size:23.3px;color:#f75464;white-space:pre">[28/Apr/2024 17:05:52] "GET /admin/app01/depart/ HTTP/1.1" 200 9632</div>
<div class="a m" style="left:160px;top:1595.04px;height:38.5px;line-height:38.5px;font-size:23.3px;color:#f75464;white-space:pre">[28/Apr/2024 17:05:52] "GET /admin/jsi18n/ HTTP/1.1" 200 3342</div>
<div class="a m" style="left:160px;top:1633.54px;height:38.5px;line-height:38.5px;font-size:23.3px;color:#f75464;white-space:pre">[28/Apr/2024 17:05:53] "GET /admin/app01/depart/ HTTP/1.1" 200 9632</div>
<div class="a m" style="left:160px;top:1672.04px;height:38.5px;line-height:38.5px;font-size:23.3px;color:#f75464;white-space:pre">[28/Apr/2024 17:05:53] "GET /admin/jsi18n/ HTTP/1.1" 200 3342</div>
<div class="a" style="left:2795px;top:1374px;width:14px;height:371px;background:rgba(128,130,136,0.42);"></div>
<div class="a" style="left:2198px;top:1577px;width:595px;height:152px;background:#393b40;border:1px solid #43454a;border-radius:12px;box-shadow:0 4px 14px rgba(0,0,0,0.35)"></div>
<svg style="left:2224px;top:1597px" width="26" height="26" viewBox="0 0 26 26"><defs><clipPath id="nc"><circle cx="12.9" cy="12.8" r="12.2"/></clipPath></defs><circle cx="12.9" cy="12.8" r="12.2" fill="#bfc0c4"/><rect x="0" y="11.3" width="26" height="3" fill="#393b40" clip-path="url(#nc)"/><path d="M6.9 5.4h4.4l1.6 3.5 1.6-3.5h4.4l-3.9 7.4 3.9 7.4h-4.4l-1.6-3.5-1.6 3.5H6.9l3.9-7.4z" fill="#3d9bd6" stroke="#393b40" stroke-width="1.6" stroke-linejoin="round"/></svg>
<div class="a" style="left:2260.67px;top:1593px;height:40px;line-height:40px;white-space:pre;font-size:23px;color:#ffffff;font-weight:bold;transform:scaleX(1.0345);transform-origin:0 0;">Rerun 'drf'</div>
<div class="a" style="left:2260.66px;top:1629px;height:40px;line-height:40px;white-space:pre;font-size:23px;color:#dfe1e5;font-weight:normal;transform:scaleX(1.0442);transform-origin:0 0;">Shortcut 'Ctrl+F5' missed 3 times</div>
<div class="a" style="left:2259.60px;top:1673px;height:40px;line-height:40px;white-space:pre;font-size:23px;color:#548af7;font-weight:normal;transform:scaleX(1.0516);transform-origin:0 0;">Edit Keybinding</div>
<div class="a" style="left:2453.80px;top:1673px;height:40px;line-height:40px;white-space:pre;font-size:23px;color:#548af7;font-weight:normal;transform:scaleX(1.1000);transform-origin:0 0;">More</div>
<svg style="left:2517px;top:1689px" width="18" height="12" viewBox="0 0 18 12"><path d="M2 3 L9 9 L16 3" fill="none" stroke="#a8abb0" stroke-width="1.8" stroke-linecap="round" stroke-linejoin="round"/></svg>
<div class="a" style="left:25px;top:1768px;width:14px;height:14px;background:#233152;border:2px solid #548af7;border-radius:3px"></div>
<div class="a" style="left:45.68px;top:1753px;height:40px;line-height:40px;white-space:pre;font-size:23px;color:#a8adb5;font-weight:normal;transform:scaleX(1.1231);transform-origin:0 0;">drf</div>
<svg style="left:91px;top:1765px" width="12" height="18" viewBox="0 0 12 18"><path d="M3 2 L9 9 L3 16" fill="none" stroke="#a8abb0" stroke-width="1.8" stroke-linecap="round" stroke-linejoin="round"/></svg>
<div class="a" style="left:117.98px;top:1753px;height:40px;line-height:40px;white-space:pre;font-size:23px;color:#a8adb5;font-weight:normal;transform:scaleX(1.0161);transform-origin:0 0;">app01</div>
<svg style="left:201px;top:1765px" width="12" height="18" viewBox="0 0 12 18"><path d="M3 2 L9 9 L3 16" fill="none" stroke="#a8abb0" stroke-width="1.8" stroke-linecap="round" stroke-linejoin="round"/></svg>
<svg style="left:228.5px;top:1760.5px" width="26" height="26" viewBox="0 0 16 16"><path d="M7.95.4C5.1.4 4.95 1.7 4.95 1.7V3.3h3.1v.5H3.5S.4 3.45.4 8.05s2.75 4.5 2.75 4.5h1.7v-2.25s-.1-2.75 2.7-2.75h3.05s2.6.05 2.6-2.5V2.85S13.6.4 7.95.4z" fill="#3b77b0"/><circle cx="6.3" cy="2.05" r=".6" fill="#2b2d30"/><g transform="rotate(180 8 8)"><path d="M7.95.4C5.1.4 4.95 1.7 4.95 1.7V3.3h3.1v.5H3.5S.4 3.45.4 8.05s2.75 4.5 2.75 4.5h1.7v-2.25s-.1-2.75 2.7-2.75h3.05s2.6.05 2.6-2.5V2.85S13.6.4 7.95.4z" fill="#f2cb36"/><circle cx="6.3" cy="2.05" r=".6" fill="#2b2d30"/></g></svg>
<div class="a" style="left:262.56px;top:1753px;height:40px;line-height:40px;white-space:pre;font-size:23px;color:#a8adb5;font-weight:normal;transform:scaleX(1.0366);transform-origin:0 0;">admin.py</div>
<div class="a" style="left:2023.06px;top:1754.6px;height:40px;line-height:40px;white-space:pre;font-size:23px;color:#a8adb5;font-weight:normal;transform:scaleX(0.9419);transform-origin:0 0;">12:1</div>
<div class="a" style="left:2097px;top:1763px;width:11px;height:11px;background:#f25022;"></div>
<div class="a" style="left:2110px;top:1763px;width:11px;height:11px;background:#7fba00;"></div>
<div class="a" style="left:2097px;top:1776px;width:11px;height:11px;background:#00a4ef;"></div>
<div class="a" style="left:2110px;top:1776px;width:11px;height:11px;background:#ffb900;"></div>
<div class="a" style="left:2150.14px;top:1754.6px;height:40px;line-height:40px;white-space:pre;font-size:23px;color:#a8adb5;font-weight:normal;transform:scaleX(0.8644);transform-origin:0 0;">CRLF</div>
<div class="a" style="left:2231.03px;top:1754.6px;height:40px;line-height:40px;white-space:pre;font-size:23px;color:#a8adb5;font-weight:normal;transform:scaleX(0.9688);transform-origin:0 0;">UTF-8</div>
<div class="a" style="left:2323.60px;top:1754.6px;height:40px;line-height:40px;white-space:pre;font-size:23px;color:#a8adb5;font-weight:normal;transform:scaleX(0.9609);transform-origin:0 0;">4 spaces</div>
<div class="a" style="left:2439.90px;top:1754.6px;height:40px;line-height:40px;white-space:pre;font-size:23px;color:#a8adb5;font-weight:normal;transform:scaleX(1.0515);transform-origin:0 0;">Python 3.11 (drf)</div>
<svg style="left:2650px;top:1760px" width="26" height="28" viewBox="0 0 26 28"><rect x="1.5" y="12" width="16" height="13" rx="2" fill="none" stroke="#ced0d6" stroke-width="2.2"/><path d="M12 12V7.5a5 5 0 0 1 10 0V10" fill="none" stroke="#ced0d6" stroke-width="2.2"/><path d="M9.5 16v4" stroke="#ced0d6" stroke-width="2.2"/></svg>
<div class="a" style="left:2688px;top:1748px;width:50px;height:51px;background:#2f3f60;"></div>
<div class="a" style="left:2738px;top:1748px;width:49px;height:51px;background:#232428;"></div>
<div class="a" style="left:2700.93px;top:1754.6px;height:40px;line-height:40px;white-space:pre;font-size:23px;color:#a8adb5;font-weight:normal;transform:scaleX(1.0652);transform-origin:0 0;">924 of 3300M</div>
<svg style="left:1035px;top:461.0px" width="112" height="22" viewBox="0 0 112 22"><g fill="none" stroke="#6aab73" stroke-width="1.45" stroke-linecap="round" stroke-linejoin="round"><path d="M3 3.5L9.5 2M1 8h19M8.5 2.5v16.5l-2.5-1.5M1 15.5l11-3.5M11.5 1c.3 6 2.5 12 8.5 18M15.5 2l2 2M19 11l-6 6.5"/><g transform="translate(22.2,0)"><path d="M5 1L4 4.5M2 4.5h6v14.5H2zM2 11.5h6M12.5 1l-2 6M11 5h8v13l-3 1M13 10l2 3"/></g><g transform="translate(44.4,0)"><path d="M9.5 0.5L8 3.5M3.5 3.5h13v15.5h-13zM3.5 8.8h13M3.5 14h13"/></g><g transform="translate(66.6,0)"><path d="M10 0.5v2M2 6V3.5h16V6M4.5 8h11M10 8v9.5M10 12.5h5.5M6.5 10.5c0 4-1 6.5-3.5 8.5M6 15.5c3 3 8 3.5 13 3.5"/></g><g transform="translate(88.8,0)"><path d="M8.5 1l2.5 3.5M4 5.5c3 7 8 11.5 15 13.5M17 5c-3 7-8 11.5-15 14"/></g></g></svg>
</body></html>
